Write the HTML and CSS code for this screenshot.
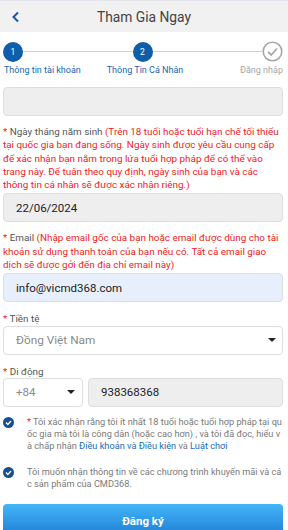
FILE: index.html
```html
<!DOCTYPE html>
<html lang="vi">
<head>
<meta charset="utf-8">
<link rel="stylesheet" href="styles.css">
</head>
<body>
<div class="header">
  <span class="back"><svg width="10" height="12" viewBox="0 0 10 12"><path d="M7 1.5 L2.5 6 L7 10.5" fill="none" stroke="#1459a6" stroke-width="2"/></svg></span>
  <div class="title">Tham Gia Ngay</div>
</div>
<div class="steps">
  <div class="track">
    <div class="dot">1</div>
    <div class="line"></div>
    <div class="dot">2</div>
    <div class="line"></div>
    <div class="done"><svg width="21" height="21" viewBox="0 0 21 21"><circle cx="10.5" cy="10.5" r="9.3" fill="#fff" stroke="#a8a8a8" stroke-width="1.6"/><path d="M6 10.8 L9.2 14 L15 7.5" fill="none" stroke="#a8a8a8" stroke-width="1.8"/></svg></div>
  </div>
  <div class="labels">
    <span class="lab act first">Thông tin tài khoản</span>
    <span class="lab act mid">Thông Tin Cá Nhân</span>
    <span class="lab last">Đăng nhập</span>
  </div>
</div>
<div class="form">
  <div class="input grey"></div>
  <div class="label"><span class="red">* </span>Ngày tháng năm sinh <span class="red">(Trên 18 tuổi hoặc tuổi hạn chế tối thiểu tại quốc gia bạn đang sống. Ngày sinh được yêu cầu cung cấp để xác nhận bạn nằm trong lứa tuổi hợp pháp để có thể vào trang này. Để tuân theo quy định, ngày sinh của bạn và các thông tin cá nhân sẽ được xác nhận riêng.)</span></div>
  <div class="input grey">22/06/2024</div>
  <div class="label"><span class="red">* </span>Email <span class="red">(Nhập email gốc của bạn hoặc email được dùng cho tài khoản sử dụng thanh toán của bạn nếu có. Tất cả email giao dịch sẽ được gởi đến địa chỉ email này)</span></div>
  <div class="input blue">info@vicmd368.com</div>
  <div class="label short"><span class="red">* </span>Tiền tệ</div>
  <div class="input white select"><span class="ph">Đồng Việt Nam</span><span class="caret"></span></div>
  <div class="label short"><span class="red">* </span>Di động</div>
  <div class="phone">
    <div class="input white select code"><span class="ph">+84</span><span class="caret"></span></div>
    <div class="input grey num">938368368</div>
  </div>
  <div class="check">
    <span class="tick"><svg width="11" height="11" viewBox="0 0 11 11"><circle cx="5.5" cy="5.5" r="5.5" fill="#164f90"/><path d="M3 5.6 L4.8 7.4 L8 4" fill="none" stroke="#fff" stroke-width="1.4"/></svg></span>
    <p class="ctext"><span class="red">* </span>Tôi xác nhận rằng tôi ít nhất 18 tuổi hoặc tuổi hợp pháp tại quốc gia mà tôi là công dân (hoặc cao hơn) , và tôi đã đọc, hiểu và chấp nhận <a class="link">Điều khoản và Điều kiện</a> và <a class="link">Luật chơi</a></p>
  </div>
  <div class="check second">
    <span class="tick"><svg width="11" height="11" viewBox="0 0 11 11"><circle cx="5.5" cy="5.5" r="5.5" fill="#164f90"/><path d="M3 5.6 L4.8 7.4 L8 4" fill="none" stroke="#fff" stroke-width="1.4"/></svg></span>
    <p class="ctext">Tôi muốn nhận thông tin về các chương trình khuyến mãi và các sản phẩm của CMD368.</p>
  </div>
  <button class="submit">Đăng ký</button>
</div>
</body>
</html>
```
FILE: styles.css
```css
* { box-sizing: border-box; }
html, body { margin: 0; padding: 0; background: #fff; }
body { font-family: Roboto, "Noto Sans", sans-serif; color: #444; width: 288px; height: 530px; overflow: hidden; }
.header { height: 32px; background: #f1f1f1; border-top: 1px solid #e4e4ec; display: flex; align-items: center; position: relative; }
.back { position: absolute; left: 11px; top: 10px; line-height: 0; }
.title { flex: 1; text-align: center; font-size: 13.8px; color: #444; padding-top: 1px; }
.steps { padding: 9px 5px 0 3px; }
.track { display: flex; align-items: center; height: 21px; }
.dot { width: 20px; height: 20px; border-radius: 50%; background: #0e5eaa; color: #fff; font-size: 8.5px; display: flex; align-items: center; justify-content: center; }
.line { flex: 1; height: 1px; background: #cfcfcf; }
.done { line-height: 0; }
.labels { display: grid; grid-template-columns: 1fr auto 1fr; margin-top: 2px; }
.lab { font-size: 9px; line-height: 12px; color: #a6a6a6; white-space: nowrap; }
.lab.act { color: #1566b8; }
.first { padding-left: 1px; }
.mid { margin-left: 4px; }
.last { text-align: right; }
.form { padding: 11px 5px 0 3px; display: flex; flex-direction: column; }
.input { height: 29px; flex: none; border: 1px solid #dedede; border-radius: 4px; font-size: 11.5px; color: #222; display: flex; align-items: center; padding: 0 12px; }
.grey { background: #eeeeee; }
.blue { background: #e8effc; }
.white { background: #fff; }
.label { font-size: 9.9px; line-height: 13.3px; color: #555; margin: 9px 0 2px; }
.label.short { margin: 10px 0 0; }
.red { color: #ef1c1c; }
.select { justify-content: space-between; padding-right: 6px; }
.ph { color: #8a8a8a; font-size: 11.8px; }
.caret { width: 0; height: 0; border-left: 4px solid transparent; border-right: 4px solid transparent; border-top: 4px solid #222; }
.phone { display: flex; gap: 5px; }
.code { width: 80px; padding-right: 7px; }
.code .ph { font-size: 11.5px; }
.num { flex: 1; }
.check { display: flex; align-items: flex-start; margin-top: 9px; }
.check.second { margin-top: 14px; }
.tick { width: 24px; flex: none; line-height: 0; padding-top: 1.5px; }
.ctext { margin: 0; font-size: 9.2px; line-height: 12px; color: #7a7a7a; word-break: break-all; }
.link { color: #1a6db8; }
.submit { margin-top: 14px; height: 34px; flex: none; border: none; border-radius: 4px; background: linear-gradient(#43b6f9, #1c7ad0); color: #fff; font-family: Roboto, sans-serif; font-weight: bold; font-size: 11.5px; padding: 0; width: 100%; }
```
